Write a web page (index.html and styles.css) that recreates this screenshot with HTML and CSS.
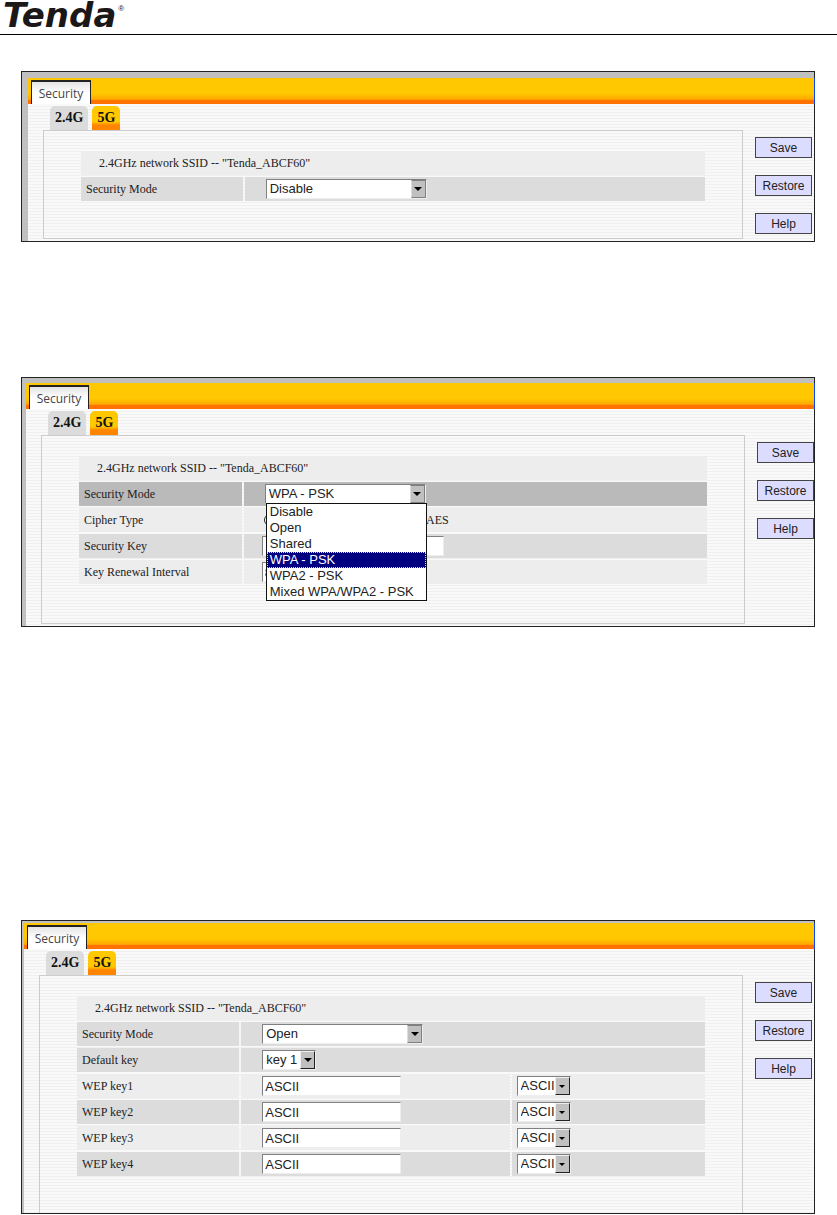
FILE: index.html
```html
<!DOCTYPE html>
<html lang="en">
<head>
  <meta charset="UTF-8">
  <title>Tenda - Security</title>
  <link rel="stylesheet" href="styles.css">
</head>
<body>
  <header class="page-header">
    <div class="logo">Tenda<sup>®</sup></div>
  </header>

  <!-- Security mode: Disable -->
  <section class="panel panel-disable">
    <div class="bar"><a class="page-tab" href="#">Security</a></div>
    <div class="main">
      <div class="content">
        <nav class="bands">
          <a class="band" href="#">2.4G</a>
          <a class="band active" href="#">5G</a>
        </nav>
        <div class="box">
          <table>
            <colgroup><col class="col-label"><col></colgroup>
            <tr><th class="ssid" colspan="2">2.4GHz network SSID -- "Tenda_ABCF60"</th></tr>
            <tr class="dark">
              <th><label for="mode1">Security Mode</label></th>
              <td>
                <div class="field wide">
                  <select id="mode1"><option>Disable</option></select>
                  <span class="arrow"></span>
                </div>
              </td>
            </tr>
          </table>
        </div>
      </div>
      <div class="buttons">
        <button type="button">Save</button>
        <button type="button">Restore</button>
        <button type="button">Help</button>
      </div>
    </div>
  </section>

  <!-- Security mode: WPA - PSK, list open -->
  <section class="panel panel-wpa">
    <div class="bar"><a class="page-tab" href="#">Security</a></div>
    <div class="main">
      <div class="content">
        <nav class="bands">
          <a class="band" href="#">2.4G</a>
          <a class="band active" href="#">5G</a>
        </nav>
        <div class="box">
          <table>
            <colgroup><col class="col-label"><col></colgroup>
            <tr><th class="ssid" colspan="2">2.4GHz network SSID -- "Tenda_ABCF60"</th></tr>
            <tr class="selected">
              <th><label for="mode2">Security Mode</label></th>
              <td>
                <div class="field wide">
                  <select id="mode2"><option>WPA - PSK</option></select>
                  <span class="arrow"></span>
                  <ul class="options" role="listbox" aria-label="Security Mode">
                    <li role="option">Disable</li>
                    <li role="option">Open</li>
                    <li role="option">Shared</li>
                    <li role="option" class="current" aria-selected="true">WPA - PSK</li>
                    <li role="option">WPA2 - PSK</li>
                    <li role="option">Mixed WPA/WPA2 - PSK</li>
                  </ul>
                </div>
              </td>
            </tr>
            <tr>
              <th>Cipher Type</th>
              <td class="inner">
                <div class="radios">
                  <input type="radio" name="cipher" aria-label="TKIP" checked>
                  <label><input type="radio" name="cipher">AES</label>
                </div>
              </td>
            </tr>
            <tr class="dark">
              <th><label for="key">Security Key</label></th>
              <td class="inner"><input class="text key" id="key" type="text"></td>
            </tr>
            <tr>
              <th><label for="interval">Key Renewal Interval</label></th>
              <td class="inner"><input class="text interval" id="interval" type="text" value="8"></td>
            </tr>
          </table>
        </div>
      </div>
      <div class="buttons">
        <button type="button">Save</button>
        <button type="button">Restore</button>
        <button type="button">Help</button>
      </div>
    </div>
  </section>

  <!-- Security mode: Open, WEP keys -->
  <section class="panel panel-open">
    <div class="bar"><a class="page-tab" href="#">Security</a></div>
    <div class="main">
      <div class="content">
        <nav class="bands">
          <a class="band" href="#">2.4G</a>
          <a class="band active" href="#">5G</a>
        </nav>
        <div class="box">
          <table>
            <colgroup><col class="col-label"><col><col class="col-type"></colgroup>
            <tr><th class="ssid" colspan="3">2.4GHz network SSID -- "Tenda_ABCF60"</th></tr>
            <tr class="dark">
              <th><label for="mode3">Security Mode</label></th>
              <td colspan="2">
                <div class="field wide">
                  <select id="mode3"><option>Open</option></select>
                  <span class="arrow"></span>
                </div>
              </td>
            </tr>
            <tr class="dark">
              <th><label for="defkey">Default key</label></th>
              <td colspan="2">
                <div class="field short">
                  <select id="defkey"><option>key 1</option></select>
                  <span class="arrow raised"></span>
                </div>
              </td>
            </tr>
            <tr>
              <th><label for="wep1">WEP key1</label></th>
              <td><input class="text" id="wep1" type="text" value="ASCII"></td>
              <td class="type">
                <div class="field short">
                  <select aria-label="WEP key1 type"><option>ASCII</option></select>
                  <span class="arrow raised small"></span>
                </div>
              </td>
            </tr>
            <tr class="dark">
              <th><label for="wep2">WEP key2</label></th>
              <td><input class="text" id="wep2" type="text" value="ASCII"></td>
              <td class="type">
                <div class="field short">
                  <select aria-label="WEP key2 type"><option>ASCII</option></select>
                  <span class="arrow raised small"></span>
                </div>
              </td>
            </tr>
            <tr>
              <th><label for="wep3">WEP key3</label></th>
              <td><input class="text" id="wep3" type="text" value="ASCII"></td>
              <td class="type">
                <div class="field short">
                  <select aria-label="WEP key3 type"><option>ASCII</option></select>
                  <span class="arrow raised small"></span>
                </div>
              </td>
            </tr>
            <tr class="dark">
              <th><label for="wep4">WEP key4</label></th>
              <td><input class="text" id="wep4" type="text" value="ASCII"></td>
              <td class="type">
                <div class="field short">
                  <select aria-label="WEP key4 type"><option>ASCII</option></select>
                  <span class="arrow raised small"></span>
                </div>
              </td>
            </tr>
          </table>
        </div>
      </div>
      <div class="buttons">
        <button type="button">Save</button>
        <button type="button">Restore</button>
        <button type="button">Help</button>
      </div>
    </div>
  </section>
</body>
</html>
```

FILE: styles.css
```css
* {
  box-sizing: border-box;
}

body {
  margin: 0;
  background: #fff;
  color: #222;
  font-family: "Liberation Serif", "Times New Roman", serif;
  font-size: 12px;
}

a {
  color: inherit;
  text-decoration: none;
}

.page-header {
  display: flex;
  height: 35px;
  padding-left: 3px;
  border-bottom: 1px solid #000;
}

.logo {
  display: flex;
  gap: 2px;
  color: #1c1818;
  font: italic bold 34px/30px "DejaVu Sans", sans-serif;
}

.logo sup {
  font: 8px/18px "Liberation Sans", Arial, sans-serif;
}

/* panels */
.panel {
  margin: 0 22px 0 21px;
  border: 1px solid #222;
  background: #c0c0c0;
}

.panel-disable {
  margin-top: 36px;
  padding: 6px 0 0 6px;
}

.panel-wpa {
  margin-top: 135px;
  padding: 5px 0 0 4px;
}

.panel-open {
  margin-top: 293px;
  padding: 2px 0 0 2px;
}

.bar {
  height: 26px;
  margin-right: -1px;
  padding: 2px 0 0 3px;
  border-right: 1px solid #0a46ff;
  background: linear-gradient(#ffc800 60%, #ffa800 82%, #ff7200 86%, #ff7200);
}

.page-tab {
  display: block;
  width: 60px;
  height: 24px;
  border: 1px solid #222;
  border-top-width: 2px;
  border-bottom: 0;
  background: linear-gradient(#e4e4e4, #fff 50%);
  color: #444;
  font: 12px/24px "Open Sans", "Noto Sans", sans-serif;
  text-align: center;
}

.main {
  display: flex;
  gap: 12px;
  padding: 2px 2px 2px 15px;
  background: repeating-linear-gradient(#f9f9f9 0, #f9f9f9 2px, #f0f0f0 2px, #f0f0f0 3px);
}

.panel-wpa .main {
  padding-right: 0;
}

.panel-open .main {
  padding-bottom: 0;
}

.content {
  flex: 1;
}

.bands {
  display: flex;
  gap: 4px;
  padding-left: 7px;
}

.band {
  height: 24px;
  padding: 0 5px;
  border-radius: 5px 5px 0 0;
  background: #dcdcdc;
  color: #111;
  font-size: 14px;
  font-weight: bold;
  line-height: 24px;
}

.band.active {
  background: linear-gradient(#ffc800 65%, #ff8400 80%);
}

.box {
  padding: 18px 35px 35px;
  border: 1px solid #ccc;
}

.panel-wpa .box {
  padding-bottom: 37px;
}

.panel-open .box {
  border-bottom: 0;
}

table {
  width: 100%;
  border-spacing: 2px;
  table-layout: fixed;
}

.col-label {
  width: 26%;
}

.col-type {
  width: 31%;
}

th,
td {
  height: 24px;
  padding: 0;
  background: #ededed;
  text-align: left;
  font-weight: normal;
}

th {
  padding-left: 5px;
}

.ssid {
  padding-left: 18px;
}

td {
  padding-left: 21px;
}

.inner {
  padding-left: 18px;
}

.type {
  padding-left: 5px;
}

.dark th,
.dark td {
  background: #dcdcdc;
}

.selected th,
.selected td {
  background: #bababa;
}

/* fields */
.field {
  position: relative;
  display: flex;
  height: 20px;
  border: 1px solid #808080;
  border-right-color: #eee;
  border-bottom-color: #eee;
  background: #fff;
}

.wide {
  width: 161px;
}

.short {
  width: 54px;
}

select {
  flex: 1;
  min-width: 0;
  padding: 0 0 0 3px;
  border: 0;
  appearance: none;
  background: none;
  color: #222;
  font: 13px/18px "Liberation Sans", Arial, sans-serif;
}

.arrow {
  display: flex;
  align-items: center;
  justify-content: center;
  width: 15px;
  border: 1px solid #808080;
  border-left-color: #ddd;
  background: #c0c0c0;
}

.arrow::before {
  content: "";
  border: 4px solid transparent;
  border-top-color: #000;
  border-bottom: 0;
}

.arrow.raised {
  border-color: #eee #222 #222 #eee;
}

.arrow.small::before {
  border-width: 3px 3px 0;
}

.options {
  position: absolute;
  z-index: 1;
  top: 18px;
  left: 0;
  width: 161px;
  margin: 0;
  padding: 0;
  border: 1px solid #111;
  background: #fff;
  color: #222;
  font: 13px/16px "Liberation Sans", Arial, sans-serif;
  list-style: none;
}

.options li {
  padding-left: 3px;
}

.options .current {
  background: #000080;
  color: #fff;
  outline: 1px dotted #e8e080;
  outline-offset: -1px;
}

.text {
  display: block;
  width: 139px;
  height: 20px;
  padding: 0 2px;
  border: 1px solid #808080;
  border-right-color: #eee;
  border-bottom-color: #eee;
  background: #fff;
  color: #222;
  font: 13px/18px "Liberation Sans", Arial, sans-serif;
}

.key {
  width: 182px;
}

.interval {
  width: 60px;
}

.radios {
  display: flex;
  align-items: center;
  justify-content: space-between;
  width: 187px;
}

.radios label {
  display: flex;
  align-items: center;
}

.radios input {
  width: 12px;
  height: 12px;
  margin: 0 4px 0 2px;
  accent-color: #222;
}

/* side buttons */
.buttons {
  display: flex;
  flex-direction: column;
  gap: 17px;
  padding-top: 31px;
}

button {
  width: 57px;
  height: 21px;
  padding: 0;
  border: 1px solid #444;
  background: #dcdcff;
  color: #222;
  font: 12px "Liberation Sans", Arial, sans-serif;
}
```
